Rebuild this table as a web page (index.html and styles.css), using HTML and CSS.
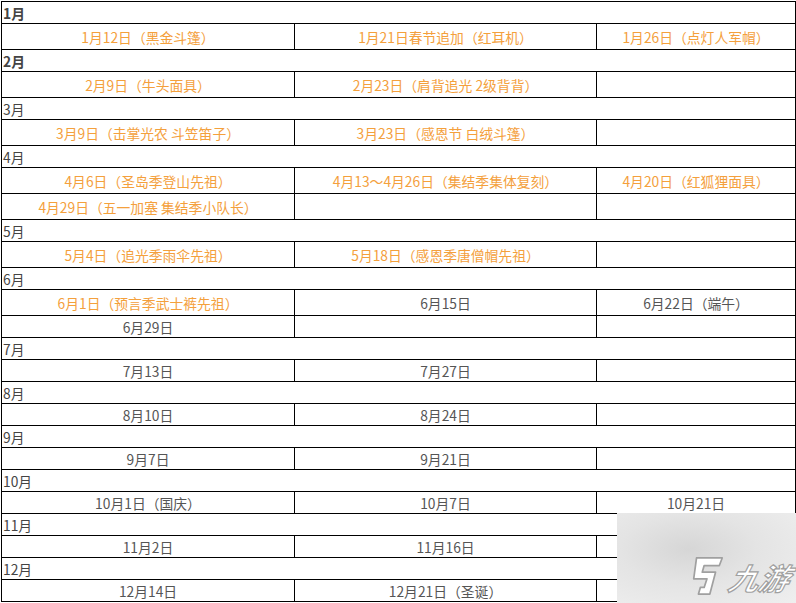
FILE: index.html
```html
<!DOCTYPE html>
<html lang="zh-CN">
<head>
<meta charset="utf-8">
<title>2021 复刻日历</title>
<link rel="stylesheet" href="styles.css">
</head>
<body>
<div class="page">
<table class="cal">
  <colgroup><col class="c1"><col class="c2"><col class="c3"></colgroup>
  <tbody>
    <tr class="mh"><td colspan="3" class="bold">1月</td></tr>
    <tr class="tall"><td class="or">1月12日（黑金斗篷）</td><td class="or">1月21日春节追加（红耳机）</td><td class="or">1月26日（点灯人军帽）</td></tr>
    <tr class="mh"><td colspan="3" class="bold">2月</td></tr>
    <tr class="tall"><td class="or">2月9日（牛头面具）</td><td class="or">2月23日（肩背追光 2级背背）</td><td></td></tr>
    <tr class="mh"><td colspan="3">3月</td></tr>
    <tr class="tall"><td class="or">3月9日（击掌光农 斗笠笛子）</td><td class="or">3月23日（感恩节 白绒斗篷）</td><td></td></tr>
    <tr class="mh"><td colspan="3">4月</td></tr>
    <tr class="tall"><td class="or">4月6日（圣岛季登山先祖）</td><td class="or">4月13～4月26日（集结季集体复刻）</td><td class="or">4月20日（红狐狸面具）</td></tr>
    <tr class="tall"><td class="or">4月29日（五一加塞 集结季小队长）</td><td></td><td></td></tr>
    <tr class="mh"><td colspan="3">5月</td></tr>
    <tr class="tall"><td class="or">5月4日（追光季雨伞先祖）</td><td class="or">5月18日（感恩季唐僧帽先祖）</td><td></td></tr>
    <tr class="mh"><td colspan="3">6月</td></tr>
    <tr class="tall"><td class="or">6月1日（预言季武士裤先祖）</td><td>6月15日</td><td>6月22日（端午）</td></tr>
    <tr class="row"><td>6月29日</td><td></td><td></td></tr>
    <tr class="mh"><td colspan="3">7月</td></tr>
    <tr class="row"><td>7月13日</td><td>7月27日</td><td></td></tr>
    <tr class="mh"><td colspan="3">8月</td></tr>
    <tr class="row"><td>8月10日</td><td>8月24日</td><td></td></tr>
    <tr class="mh"><td colspan="3">9月</td></tr>
    <tr class="row"><td>9月7日</td><td>9月21日</td><td></td></tr>
    <tr class="mh"><td colspan="3">10月</td></tr>
    <tr class="row"><td>10月1日（国庆）</td><td>10月7日</td><td>10月21日</td></tr>
    <tr class="mh"><td colspan="3">11月</td></tr>
    <tr class="row"><td>11月2日</td><td>11月16日</td><td></td></tr>
    <tr class="mh"><td colspan="3">12月</td></tr>
    <tr class="row"><td>12月14日</td><td>12月21日（圣诞）</td><td></td></tr>
  </tbody>
</table>
<div class="mark">
  <svg class="mark-logo" width="38" height="42" viewBox="0 0 40 44">
    <path d="M9 3 L36 3 L33 11 L17 11 L15 18 L29 18 L23 41 L11 41 L13 34 L17 34 L20 25 L6 25 Z" fill="#fff" stroke="#a0a0a0" stroke-width="1.8" stroke-linejoin="round"/>
  </svg>
  <span class="mark-text">九游</span>
</div>
</div>
</body>
</html>
```
FILE: styles.css
```css
html, body {
  margin: 0;
  padding: 0;
  background: #fff;
}
.page {
  position: relative;
  width: 796px;
  height: 603px;
  overflow: hidden;
  padding: 1px 0 0 1px;
  box-sizing: border-box;
}
.cal {
  border-collapse: collapse;
  table-layout: fixed;
  width: 794px;
  font-family: "Noto Sans CJK SC", "Microsoft YaHei", sans-serif;
  font-size: 13.8px;
  color: #555;
}
.c1 { width: 293px; }
.c2 { width: 302px; }
.c3 { width: 199px; }
.cal td {
  border: 1px solid #000;
  padding: 0;
  text-align: center;
  line-height: 16px;
  vertical-align: middle;
  white-space: nowrap;
}
.mh td {
  text-align: left;
  height: 21px;
  padding-left: 1px;
  color: #444;
}
.mh td.bold { font-weight: bold; }
.tall td { height: 25px; }
.row td { height: 21px; }
.cal td.or { color: #f4a03c; }
.mark {
  position: absolute;
  left: 617px;
  top: 513px;
  width: 179px;
  height: 90px;
  background: radial-gradient(ellipse at 40% 40%, #d6d6d6 0%, #e4e4e4 45%, #efefef 100%);
  display: flex;
  align-items: flex-end;
  justify-content: flex-end;
  gap: 4px;
  padding: 0 6px 6px 0;
  box-sizing: border-box;
}
.mark-text {
  font-family: "Noto Sans CJK SC", sans-serif;
  font-size: 30px;
  font-style: italic;
  font-weight: bold;
  color: #fff;
  line-height: 40px;
  -webkit-text-stroke: 1.2px #a0a0a0;
  transform: skewX(-14deg);
}
```
